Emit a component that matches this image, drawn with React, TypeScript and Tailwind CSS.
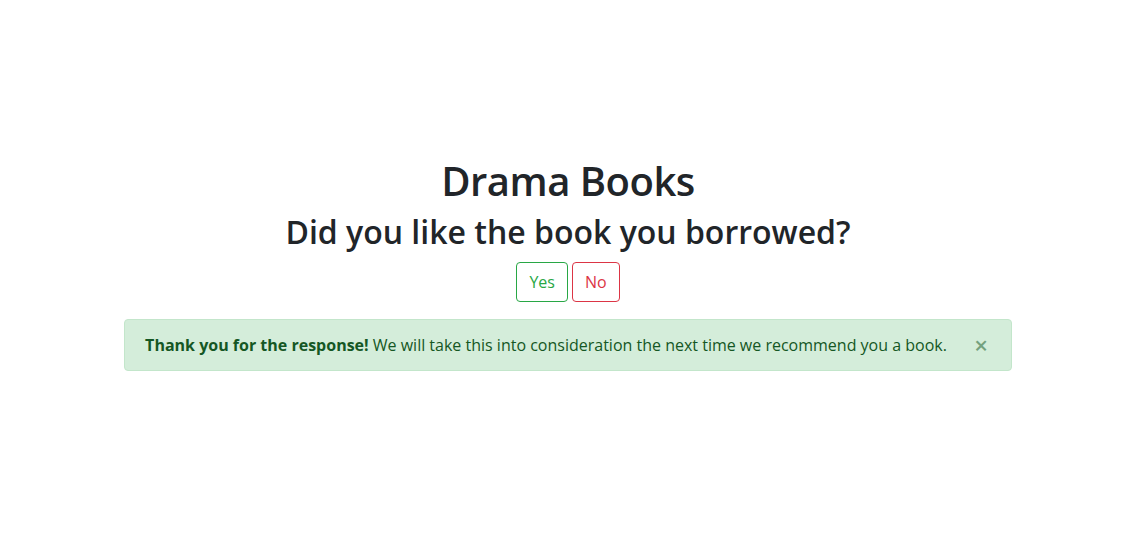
import { useState } from "react";

export default function App() {
  const [open, setOpen] = useState(true);

  return (
    <div
      className="min-h-[559px] bg-white pl-2 pt-[157px] text-center text-[#212529]"
      style={{ fontFamily: '"Open Sans", "Noto Sans", sans-serif' }}
    >
      <h1 className="mb-2 text-[40px] font-semibold leading-[1.2] tracking-[-0.5px]">Drama Books</h1>
      <h2 className="mb-[11px] text-[32px] font-semibold leading-[1.2]">
        Did you like the book you borrowed?
      </h2>

      <div className="flex justify-center gap-1">
        <button className="h-[40px] rounded border border-[#28a745] px-3 text-base leading-6 text-[#28a745]">
          Yes
        </button>
        <button className="h-[40px] rounded border border-[#dc3545] px-3 text-base leading-6 text-[#dc3545]">
          No
        </button>
      </div>

      {open && (
        <div className="mt-[17px] flex justify-center">
          <div className="relative rounded border border-[#c3e6cb] bg-[#d4edda] py-[13px] pl-5 pr-16 text-left text-base leading-6 text-[#155724]">
            <strong className="font-bold">Thank you for the response!</strong> We will take this into
            consideration the next time we recommend you a book.
            <button
              onClick={() => setOpen(false)}
              className="absolute right-0 top-0 py-[13px] pl-5 pr-[23px] text-2xl font-semibold leading-6 text-[#155724] opacity-50"
              aria-label="Close"
            >
              ×
            </button>
          </div>
        </div>
      )}
    </div>
  );
}
